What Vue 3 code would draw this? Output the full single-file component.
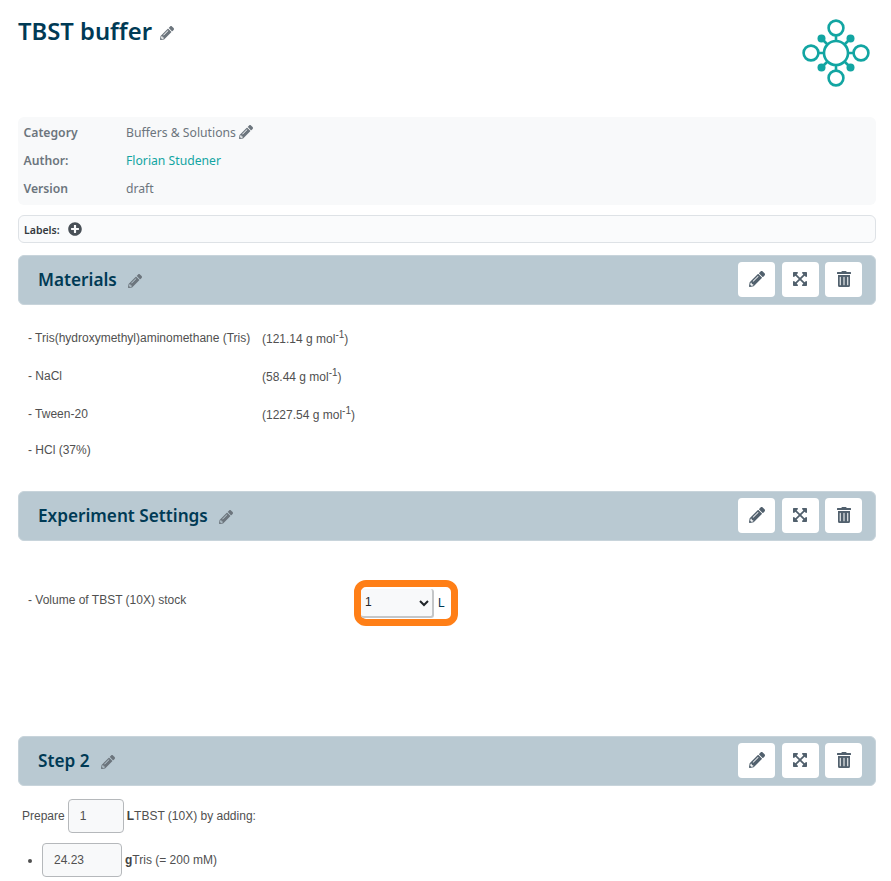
<template>
  <div class="page">
    <!-- title -->
    <div class="top">
      <h1 class="title">TBST buffer <svg class="pen pen--title" viewBox="0 0 512 512"><path :d="PENCIL" /></svg></h1>
      <svg class="logo" viewBox="0 0 70 70" fill="none" stroke="#12a5a2" stroke-width="2.6">
        <circle cx="35" cy="35" r="12" />
        <circle cx="35" cy="10" r="7.4" />
        <circle cx="35" cy="60" r="7.4" />
        <circle cx="10" cy="35" r="7.4" />
        <circle cx="60" cy="35" r="7.4" />
        <path d="M35 17.5V23.5M35 46.5V52.5M17.5 35H23.5M46.5 35H52.5M27 27L20.5 20.5M43 27L49.5 20.5M27 43L20.5 49.5M43 43L49.5 49.5" />
        <g fill="#12a5a2" stroke="none">
          <circle cx="20.5" cy="20.5" r="4" />
          <circle cx="49.5" cy="20.5" r="4" />
          <circle cx="20.5" cy="49.5" r="4" />
          <circle cx="49.5" cy="49.5" r="4" />
        </g>
      </svg>
    </div>

    <!-- info -->
    <div class="info">
      <div class="info__row">
        <span class="info__key">Category</span>
        <span>Buffers &amp; Solutions <svg class="pen pen--info" viewBox="0 0 512 512"><path :d="PENCIL" /></svg></span>
      </div>
      <div class="info__row">
        <span class="info__key">Author:</span>
        <a class="info__link">Florian Studener</a>
      </div>
      <div class="info__row">
        <span class="info__key">Version</span>
        <span>draft</span>
      </div>
    </div>

    <div class="labels">
      <span class="labels__text">Labels:</span>
      <svg class="plus" viewBox="0 0 512 512"><path d="M256 8C119 8 8 119 8 256s111 248 248 248 248-111 248-248S393 8 256 8zm144 276c0 6.6-5.4 12-12 12h-92v92c0 6.6-5.4 12-12 12h-56c-6.6 0-12-5.4-12-12v-92h-92c-6.6 0-12-5.4-12-12v-56c0-6.6 5.4-12 12-12h92v-92c0-6.6 5.4-12 12-12h56c6.6 0 12 5.4 12 12v92h92c6.6 0 12 5.4 12 12v56z" /></svg>
    </div>

    <!-- materials -->
    <section class="section section--materials">
      <div class="bar">
        <h2 class="bar__title">Materials <svg class="pen pen--bar" viewBox="0 0 512 512"><path :d="PENCIL" /></svg></h2>
        <div class="bar__btns">
          <button v-for="icon in ICONS" :key="icon.name" class="icon-btn">
            <svg :viewBox="icon.box"><path :d="icon.d" /></svg>
          </button>
        </div>
      </div>
      <div class="materials">
        <div v-for="m in materials" :key="m.name" class="material">
          <span class="material__name">- {{ m.name }}</span>
          <span v-if="m.mass" class="material__mass">({{ m.mass }} g mol<sup>-1</sup>)</span>
        </div>
      </div>
    </section>

    <!-- settings -->
    <section class="section section--settings">
      <div class="bar">
        <h2 class="bar__title">Experiment Settings <svg class="pen pen--bar" viewBox="0 0 512 512"><path :d="PENCIL" /></svg></h2>
        <div class="bar__btns">
          <button v-for="icon in ICONS" :key="icon.name" class="icon-btn">
            <svg :viewBox="icon.box"><path :d="icon.d" /></svg>
          </button>
        </div>
      </div>
      <div class="setting">
        <span class="setting__name">- Volume of TBST (10X) stock</span>
        <div class="setting__ring">
          <select class="setting__select">
            <option>1</option>
            <option>2</option>
          </select>
          <span class="setting__unit">L</span>
        </div>
      </div>
    </section>

    <!-- step -->
    <section class="section">
      <div class="bar">
        <h2 class="bar__title">Step 2 <svg class="pen pen--bar" viewBox="0 0 512 512"><path :d="PENCIL" /></svg></h2>
        <div class="bar__btns">
          <button v-for="icon in ICONS" :key="icon.name" class="icon-btn">
            <svg :viewBox="icon.box"><path :d="icon.d" /></svg>
          </button>
        </div>
      </div>
      <div class="step">
        <div class="step__line">
          Prepare
          <input class="step__input step__input--volume" value="1" />
          <span><b>L</b>TBST (10X) by adding:</span>
        </div>
        <ul class="step__list">
          <li>
            <div class="step__line">
              <input class="step__input step__input--mass" value="24.23" />
              <span><b>g</b>Tris (= 200 mM)</span>
            </div>
          </li>
        </ul>
      </div>
    </section>
  </div>
</template>

<script setup>
const PENCIL = 'M497.9 142.1l-46.1 46.1c-4.7 4.7-12.3 4.7-17 0l-111-111c-4.7-4.7-4.7-12.3 0-17l46.1-46.1c18.7-18.7 49.1-18.7 67.9 0l60.1 60.1c18.8 18.7 18.8 49.1 0 67.9zM284.2 99.8L21.6 362.4.4 483.9c-2.9 16.4 11.4 30.6 27.8 27.8l121.5-21.3 262.6-262.6c4.7-4.7 4.7-12.3 0-17l-111-111c-4.8-4.7-12.4-4.7-17.1 0zM124.1 339.9c-5.5-5.5-5.5-14.3 0-19.8l154-154c5.5-5.5 14.3-5.5 19.8 0s5.5 14.3 0 19.8l-154 154c-5.5 5.5-14.3 5.5-19.8 0zM88 424h48v36.3l-64.5 11.3-31.1-31.1L51.7 376H88v48z'

const ICONS = [
  { name: 'edit', box: '0 0 512 512', d: PENCIL },
  {
    name: 'expand',
    box: '0 0 448 512',
    d: 'M448 344v112a23.94 23.94 0 0 1-24 24H312c-21.39 0-32.09-25.9-17-41l36.2-36.2L224 295.6 116.77 402.9 153 439c15.09 15.1 4.39 41-17 41H24a23.94 23.94 0 0 1-24-24V344c0-21.4 25.89-32.1 41-17l36.19 36.2L184.46 256 77.18 148.7 41 185c-15.1 15.1-41 4.4-41-17V56a23.94 23.94 0 0 1 24-24h112c21.39 0 32.09 25.9 17 41l-36.2 36.2L224 216.4l107.23-107.3L295 73c-15.09-15.1-4.39-41 17-41h112a23.94 23.94 0 0 1 24 24v112c0 21.4-25.89 32.1-41 17l-36.19-36.2L263.54 256l107.28 107.3L407 327.1c15.1-15.2 41-4.5 41 16.9z',
  },
  {
    name: 'trash',
    box: '0 0 448 512',
    d: 'M432 32H312l-9-19a24 24 0 0 0-21-13H166a24 24 0 0 0-21 13l-9 19H16A16 16 0 0 0 0 48v32a16 16 0 0 0 16 16h416a16 16 0 0 0 16-16V48a16 16 0 0 0-16-16zM32 128v336a48 48 0 0 0 48 48h288a48 48 0 0 0 48-48V128zm88 312a16 16 0 0 1-32 0V200a16 16 0 0 1 32 0zm120 0a16 16 0 0 1-32 0V200a16 16 0 0 1 32 0zm120 0a16 16 0 0 1-32 0V200a16 16 0 0 1 32 0z',
  },
]

const materials = [
  { name: 'Tris(hydroxymethyl)aminomethane (Tris)', mass: '121.14' },
  { name: 'NaCl', mass: '58.44' },
  { name: 'Tween-20', mass: '1227.54' },
  { name: 'HCl (37%)' },
]
</script>

<style scoped>
.page {
  padding: 0 15px 0 18px;
  height: 881px;
  box-sizing: border-box;
  overflow: hidden;
  font-family: "Liberation Sans", Arial, sans-serif;
  font-size: 12px;
  color: #495057;
}

svg {
  display: inline-block;
}

.pen {
  fill: #6c757d;
}

/* title */
.top {
  display: flex;
  justify-content: space-between;
  height: 117px;
}

.title {
  margin: 15px 0 0;
  font-family: "Noto Sans", "Open Sans", sans-serif;
  font-size: 23.8px;
  line-height: 32px;
  font-weight: 600;
  color: #003a55;
}

.pen--title {
  width: 14px;
  height: 14px;
  margin-left: 2px;
}

.logo {
  width: 70px;
  height: 70px;
  margin: 18px 5px 0 0;
}

/* info */
.info {
  background: #f8f9fa;
  border-radius: 6px;
  padding: 1px 5.5px;
  height: 88px;
  box-sizing: border-box;
  font-family: "Noto Sans", "Open Sans", sans-serif;
  font-size: 12.2px;
  color: #6c757d;
}

.info__row {
  display: flex;
  align-items: center;
  height: 28px;
}

.info__key {
  width: 102.5px;
  font-weight: 600;
}

.info__link {
  color: #12a5a2;
}

.pen--info {
  width: 14px;
  height: 14px;
  vertical-align: -2px;
}

.labels {
  display: flex;
  align-items: center;
  gap: 8px;
  height: 28px;
  margin-top: 10px;
  padding: 0 5px;
  box-sizing: border-box;
  border: 1px solid #dee2e6;
  border-radius: 6px;
  background: #fafbfc;
  font-family: "Noto Sans", "Open Sans", sans-serif;
  font-size: 10.5px;
  font-weight: 600;
  color: #343a40;
}

.labels__text {
  margin-top: 1px;
}

.plus {
  width: 14px;
  height: 14px;
  fill: #495057;
}

/* section bar */
.section {
  margin-top: 12px;
}

.section--materials {
  height: 224px;
}

.section--settings {
  height: 233px;
}

.bar {
  display: flex;
  align-items: center;
  justify-content: space-between;
  height: 50px;
  padding: 0 13px 2px 19px;
  box-sizing: border-box;
  background: #b9c9d2;
  border: 1px solid #c8d4db;
  border-radius: 6px;
}

.bar__title {
  margin: 0;
  font-family: "Noto Sans", "Open Sans", sans-serif;
  font-size: 17.2px;
  font-weight: 600;
  color: #003a55;
}

.pen--bar {
  width: 14px;
  height: 14px;
  margin-left: 7px;
  vertical-align: -2px;
}

.bar__btns {
  display: flex;
  gap: 6.5px;
}

.icon-btn {
  display: flex;
  align-items: center;
  justify-content: center;
  width: 37px;
  height: 35px;
  padding: 0;
  background: #fff;
  border: none;
  border-radius: 4px;
}

.icon-btn svg {
  height: 16px;
  width: 16px;
  fill: #51606d;
}

/* materials */
.materials {
  padding: 14px 10px 0;
}

.material {
  display: flex;
  height: 38px;
  align-items: center;
  color: #505050;
}

.material:last-child {
  height: 34px;
}

.material__name {
  width: 234px;
  flex-shrink: 0;
}

.material__mass {
  position: relative;
  top: 1px;
}

sup {
  font-size: 10px;
  line-height: 0;
}

/* settings */
.setting {
  display: flex;
  align-items: center;
  padding: 39px 10px 0;
  color: #505050;
}

.setting__name {
  width: 332px;
  margin-bottom: 6px;
}

.setting__ring {
  display: flex;
  align-items: center;
  width: 104px;
  height: 46px;
  padding: 0 6px;
  box-sizing: border-box;
  border: 7px solid #ff7f17;
  border-radius: 12px;
  margin-left: -6px;
}

.setting__select {
  width: 73px;
  height: 29px;
  margin-left: -6px;
  padding: 0;
  flex-shrink: 0;
  background: #f8f9fa;
  border: none;
  border-right: 2px solid #c4c6c8;
  border-bottom: 2px solid #c4c6c8;
  border-radius: 3px;
  font-family: "Liberation Sans", Arial, sans-serif;
  font-size: 12px;
  color: #212529;
}

.setting__unit {
  margin-left: 4px;
  color: #003a55;
}

/* step */
.step {
  padding: 13px 4px 0;
  color: #505050;
}

.step__line {
  display: flex;
  align-items: center;
  gap: 3px;
}

.step__input {
  height: 34px;
  box-sizing: border-box;
  padding: 0 0 0 11px;
  background: #f8f9fa;
  border: 1px solid #b5b8bb;
  border-radius: 4px;
  font-family: "Liberation Sans", Arial, sans-serif;
  font-size: 12px;
  color: #505050;
}

.step__input--volume {
  width: 56px;
}

.step__input--mass {
  width: 80px;
}

.step__list {
  margin: 10px 0 0;
  padding: 0 0 0 20px;
}

.step b {
  color: #444;
}
</style>
